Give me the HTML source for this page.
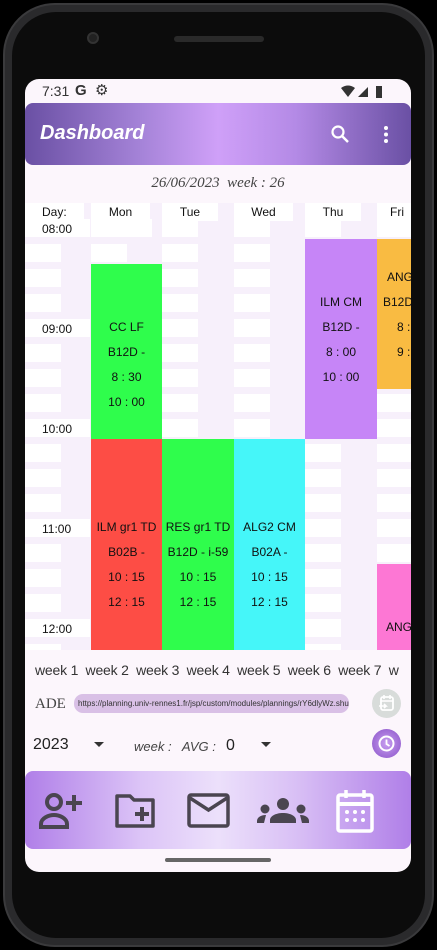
<!DOCTYPE html>
<html><head><meta charset="utf-8"><style>
*{margin:0;padding:0;box-sizing:border-box}
body{width:437px;height:950px;background:#000;position:relative;overflow:hidden;font-family:"Liberation Sans",sans-serif}
.phone{position:absolute;left:3px;top:3px;width:431px;height:944px;border-radius:52px;background:#2a2a2c;border:2px solid #3a3a3c}
.phone2{position:absolute;left:12px;top:12px;width:413px;height:926px;border-radius:44px;background:#0c0c0c}
.cam{position:absolute;left:87px;top:32px;width:12px;height:12px;border-radius:50%;background:#222;border:2px solid #333}
.spk{position:absolute;left:174px;top:36px;width:90px;height:6px;border-radius:3px;background:#2a2a2a}
.screen{position:absolute;left:25px;top:79px;width:386px;height:793px;border-radius:14px;background:#fcf6fc;overflow:hidden}
.abs{position:absolute}
.status{left:0;top:0;width:386px;height:24px;font-size:14px;color:#333}
.appbar{left:0;top:24px;width:386px;height:62px;border-radius:8px;background:linear-gradient(90deg,#6a50a4 0%,#a583d8 30%,#cfa0f8 50%,#b48ae6 70%,#6a50a4 100%)}
.grid{left:0;top:124px;width:386px;height:447px;overflow:hidden;background:#f7f0fb}
.w{position:absolute;background:#fff;height:18px}
.ev{position:absolute;font-size:12px;color:#111;text-align:center}
.ev div{position:absolute;left:0;right:0;white-space:nowrap}
.tl{position:absolute;font-size:12px;color:#111;left:17px}
</style></head><body>
<div class="phone"></div><div class="phone2"></div>
<div class="cam"></div><div class="spk"></div>
<div class="screen">
 <div class="abs status">
  <span class="abs" style="left:17px;top:4px">7:31</span>
  <span class="abs" style="left:50px;top:3px;font-weight:bold;font-size:15px">G</span>
  <span class="abs" style="left:70px;top:2px;font-size:15px">⚙</span>
  <svg class="abs" style="left:316px;top:6px" width="48" height="14"><path d="M0 3 Q7 -2 14 3 L7 12Z" fill="#333"/><path d="M17 12 L27 2 L27 12Z" fill="#333"/><rect x="35" y="1" width="6" height="12" fill="#333"/></svg>
 </div>
 <div class="abs appbar">
  <div class="abs" style="left:15px;top:19px;font-size:20px;font-style:italic;font-weight:bold;color:#fff">Dashboard</div>
  <svg class="abs" style="left:305px;top:21px" width="20" height="20"><circle cx="8" cy="8" r="5.5" stroke="#fff" stroke-width="2.2" fill="none"/><path d="M12 12 L18 18" stroke="#fff" stroke-width="2.5"/></svg>
  <svg class="abs" style="left:358px;top:22px" width="6" height="20"><circle cx="3" cy="3" r="2" fill="#fff"/><circle cx="3" cy="9.5" r="2" fill="#fff"/><circle cx="3" cy="16" r="2" fill="#fff"/></svg>
 </div>
 <div class="abs" style="left:0;top:96px;width:386px;text-align:center;font-family:'Liberation Serif',serif;font-style:italic;font-size:15px;color:#444">26/06/2023&nbsp; week : 26</div>
 <div class="abs grid" id="g">
  <div class="w" style="left:0;top:0;width:59px"></div><div class="tl" style="top:2px">Day:</div>
  <div class="w" style="left:66px;top:0;width:59px"></div><div class="tl" style="left:66px;width:59px;text-align:center;top:2px">Mon</div>
  <div class="w" style="left:137px;top:0;width:56px"></div><div class="tl" style="left:137px;width:56px;text-align:center;top:2px">Tue</div>
  <div class="w" style="left:209px;top:0;width:59px"></div><div class="tl" style="left:209px;width:59px;text-align:center;top:2px">Wed</div>
  <div class="w" style="left:280px;top:0;width:56px"></div><div class="tl" style="left:280px;width:56px;text-align:center;top:2px">Thu</div>
  <div class="w" style="left:352px;top:0;width:40px"></div><div class="tl" style="left:352px;width:40px;text-align:center;top:2px">Fri</div>
  <div id="rows"></div>
  <div class="ev" style="left:66px;top:61px;width:71px;height:175px;background:#2ffd4c"><div style="top:56px">CC LF</div><div style="top:81px">B12D -</div><div style="top:106px">8 : 30</div><div style="top:131px">10 : 00</div></div>
  <div class="ev" style="left:280px;top:36px;width:72px;height:200px;background:#c685f7"><div style="top:56px">ILM CM</div><div style="top:81px">B12D -</div><div style="top:106px">8 : 00</div><div style="top:131px">10 : 00</div></div>
  <div class="ev" style="left:352px;top:36px;width:40px;height:150px;background:#f9bb42;text-align:left"><div style="top:31px;left:10px">ANG</div><div style="top:56px;left:6px">B12D</div><div style="top:81px;left:20px">8 :</div><div style="top:106px;left:20px">9 :</div></div>
  <div class="ev" style="left:66px;top:236px;width:71px;height:215px;background:#fd4d45"><div style="top:81px">ILM gr1 TD</div><div style="top:106px">B02B -</div><div style="top:131px">10 : 15</div><div style="top:156px">12 : 15</div></div>
  <div class="ev" style="left:137px;top:236px;width:72px;height:215px;background:#2ffd4c"><div style="top:81px">RES gr1 TD</div><div style="top:106px">B12D - i-59</div><div style="top:131px">10 : 15</div><div style="top:156px">12 : 15</div></div>
  <div class="ev" style="left:209px;top:236px;width:71px;height:215px;background:#45f6f9"><div style="top:81px">ALG2 CM</div><div style="top:106px">B02A -</div><div style="top:131px">10 : 15</div><div style="top:156px">12 : 15</div></div>
  <div class="ev" style="left:352px;top:361px;width:40px;height:90px;background:#fd77d4;text-align:left"><div style="top:56px;left:9px">ANG</div></div>
 </div>
 <div class="abs" style="left:10px;top:583px;font-size:14px;color:#333;letter-spacing:-0.2px;white-space:nowrap">week 1&nbsp; week 2&nbsp; week 3&nbsp; week 4&nbsp; week 5&nbsp; week 6&nbsp; week 7&nbsp; w</div>
 <div class="abs" style="left:10px;top:617px;font-family:'Liberation Serif',serif;font-size:15px;color:#444">ADE</div>
 <div class="abs" style="left:49px;top:615px;width:275px;height:19px;border-radius:9px;background:#d9c0e6;font-size:8px;color:#333;padding:5px 0 0 4px;white-space:nowrap;overflow:hidden">https://planning.univ-rennes1.fr/jsp/custom/modules/plannings/rY6dlyWz.shu</div>
 <div class="abs" style="left:347px;top:610px;width:29px;height:29px;border-radius:50%;background:#d8dcda"><svg width="29" height="29"><rect x="9" y="8" width="12" height="13" rx="2" fill="none" stroke="#fff" stroke-width="1.8"/><path d="M9 12h12M12 6v4M18 6v4M7 17h7l-2-2M14 17l-2 2" stroke="#fff" stroke-width="1.6" fill="none"/></svg></div>
 <div class="abs" style="left:8px;top:657px;font-size:16px;color:#222">2023</div>
 <div class="abs" style="left:69px;top:663px;border-left:5px solid transparent;border-right:5px solid transparent;border-top:5px solid #333"></div>
 <div class="abs" style="left:109px;top:660px;font-size:13px;font-style:italic;color:#444">week :&nbsp;&nbsp; AVG :</div>
 <div class="abs" style="left:201px;top:658px;font-size:16px;color:#222">0</div>
 <div class="abs" style="left:236px;top:663px;border-left:5px solid transparent;border-right:5px solid transparent;border-top:5px solid #333"></div>
 <div class="abs" style="left:347px;top:650px;width:29px;height:29px;border-radius:50%;background:radial-gradient(circle,#c79ef0,#8a52c8)"><svg width="29" height="29"><circle cx="14.5" cy="14.5" r="7" fill="none" stroke="#fff" stroke-width="2"/><path d="M14.5 10.5v4.5l3 2" stroke="#fff" stroke-width="1.8" fill="none"/></svg></div>
 <div class="abs" style="left:0;top:692px;width:386px;height:78px;border-radius:8px;background:linear-gradient(90deg,#b07fe8 0%,#dcc4f7 30%,#ece0fb 50%,#d9c0f5 70%,#b07fe8 100%)">
  <svg class="abs" style="left:13px;top:20px" width="48" height="40"><circle cx="16" cy="11" r="7" fill="none" stroke="#4a4550" stroke-width="4"/><path d="M3 36v-3c0-6 8-9 13-9s13 3 13 9v3z" fill="none" stroke="#4a4550" stroke-width="4"/><path d="M36 4v16M28 12h16" stroke="#4a4550" stroke-width="4"/></svg>
  <svg class="abs" style="left:89px;top:22px" width="42" height="36"><path d="M3 3h13l4 4h19v26H3z" fill="none" stroke="#4a4550" stroke-width="3.5" stroke-linejoin="round"/><path d="M28 14v14M21 21h14" stroke="#4a4550" stroke-width="4"/></svg>
  <svg class="abs" style="left:162px;top:22px" width="44" height="36"><rect x="2" y="2" width="39" height="31" rx="2" fill="none" stroke="#4a4550" stroke-width="3.5"/><path d="M3 5l18.5 12L40 5" fill="none" stroke="#4a4550" stroke-width="3.5"/></svg>
  <svg class="abs" style="left:232px;top:26px" width="52" height="28"><circle cx="26" cy="7" r="6" fill="#4a4550"/><circle cx="8" cy="12" r="4.5" fill="#4a4550"/><circle cx="44" cy="12" r="4.5" fill="#4a4550"/><path d="M13 26v-3c0-4 6-7 13-7s13 3 13 7v3z" fill="#4a4550"/><path d="M0 26v-2c0-3 3-6 9-6l-2 8z M52 26v-2c0-3-3-6-9-6l2 8z" fill="#4a4550"/></svg>
  <svg class="abs" style="left:310px;top:17px" width="40" height="46"><rect x="3" y="7" width="34" height="36" rx="2" fill="none" stroke="#fff" stroke-width="3.5"/><path d="M3 16h34" stroke="#fff" stroke-width="4"/><path d="M11 2v8M29 2v8" stroke="#fff" stroke-width="3.5"/><g fill="#fff"><circle cx="12" cy="24" r="2"/><circle cx="20" cy="24" r="2"/><circle cx="28" cy="24" r="2"/><circle cx="12" cy="32" r="2"/><circle cx="20" cy="32" r="2"/><circle cx="28" cy="32" r="2"/></g></svg>
 </div>
 <div class="abs" style="left:140px;top:779px;width:106px;height:4px;border-radius:2px;background:#666"></div>
</div>
<script>
var r=document.getElementById('rows'),h='';
var cols=[66,137,209,280,352];
for(var i=0;i<18;i++){var t=16+25*i;var lab=(i%4==0);
 h+='<div class="w" style="left:0;top:'+t+'px;width:'+(lab?65:36)+'px"></div>';
 if(lab){h+='<div class="tl" style="top:'+(t+3)+'px">'+('0'+(8+i/4)).slice(-2)+':00</div>';}
 for(var c=0;c<5;c++){var wd=(i==0&&c==0)?61:(c==4?40:36);h+='<div class="w" style="left:'+cols[c]+'px;top:'+t+'px;width:'+wd+'px"></div>';}
}
r.innerHTML=h;
</script>
</body></html>
